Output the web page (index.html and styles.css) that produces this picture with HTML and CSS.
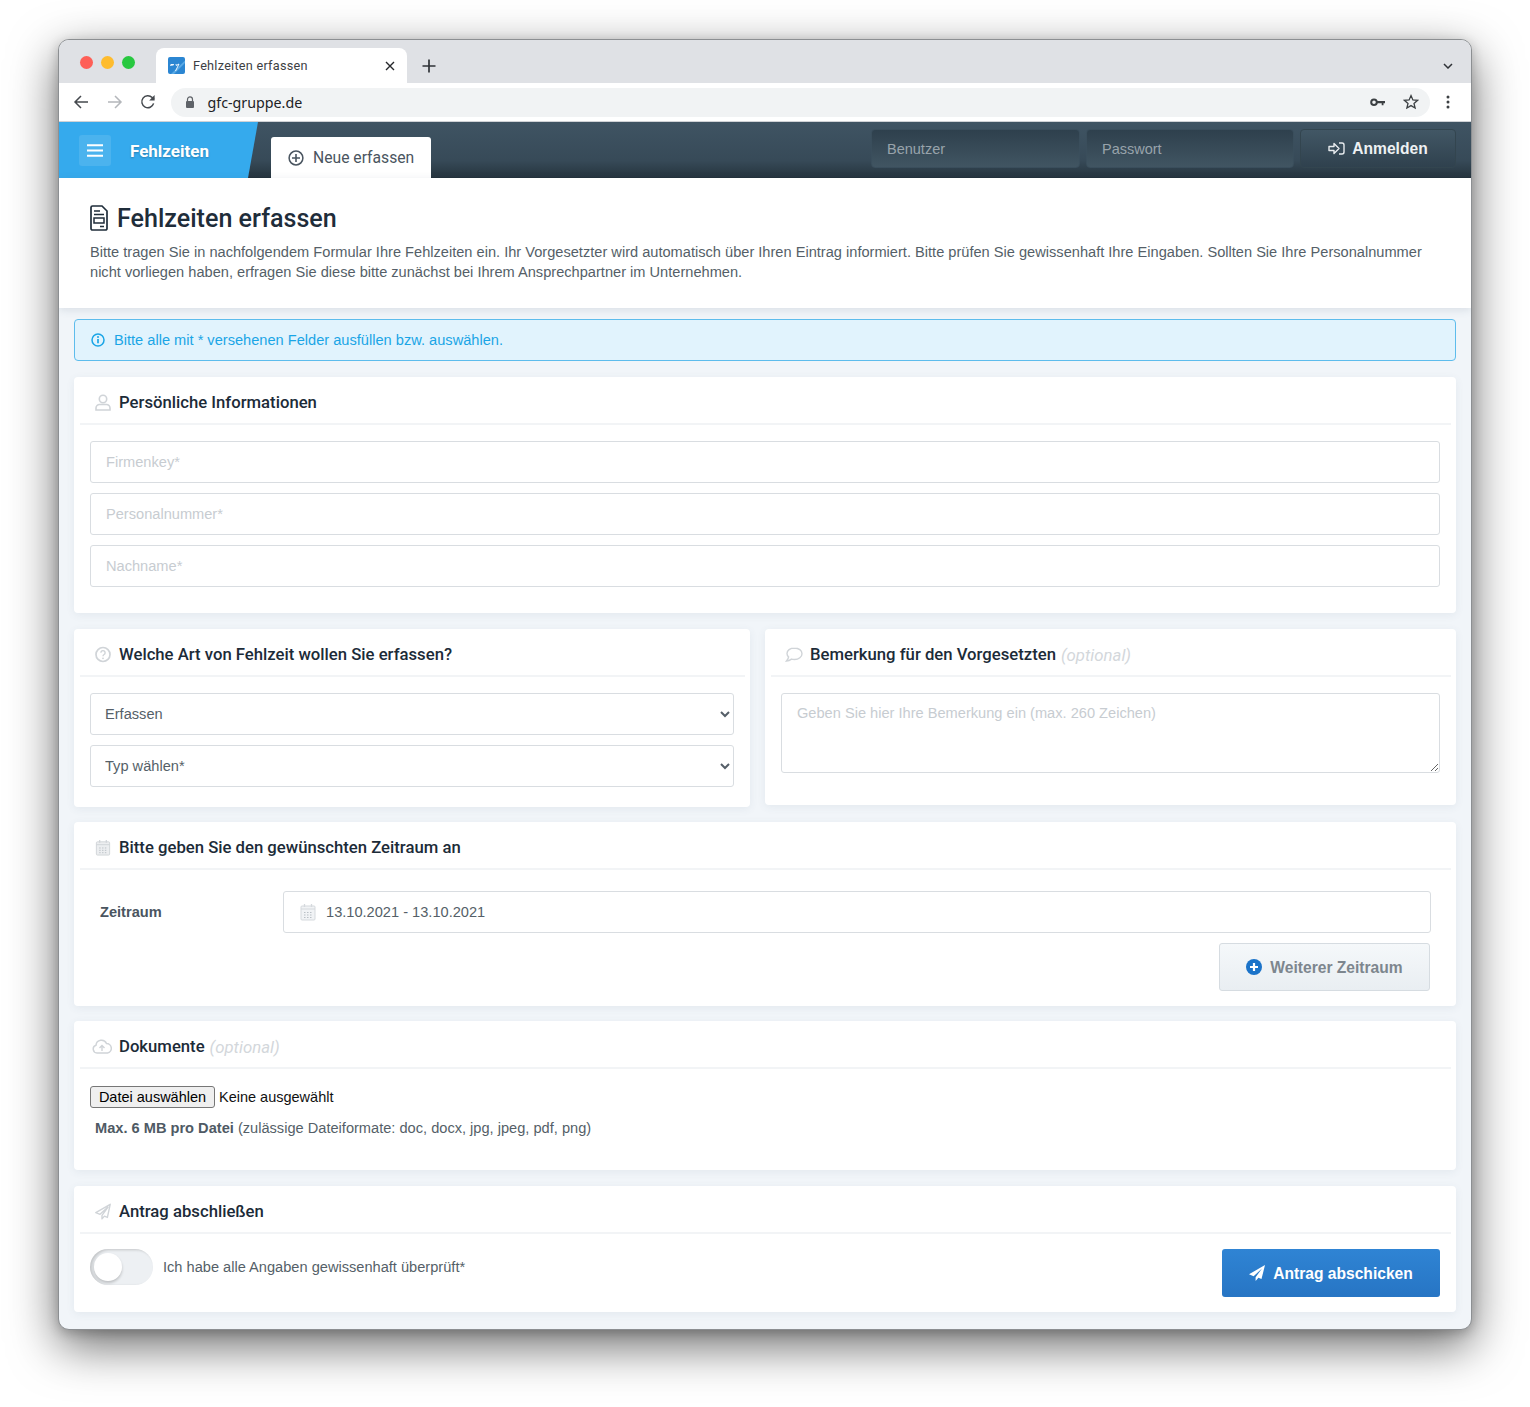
FILE: index.html
```html
<!DOCTYPE html>
<html lang="de">
<head>
<meta charset="utf-8">
<title>Fehlzeiten erfassen</title>
<link rel="stylesheet" href="styles.css">
</head>
<body>
<div class="window">
  <div class="tabstrip">
    <div class="dots"><i class="dot red"></i><i class="dot yellow"></i><i class="dot green"></i></div>
    <div class="tab">
      <svg class="favicon" viewBox="0 0 17 17"><rect width="17" height="17" rx="2" fill="#2b86d2"/><path d="M17 3.500V6L6 17H3z" fill="#5aaae6"/><path d="M2.500 8.500l1-1.500-.5 1.500 1.500-1.500-.5 1.500 1.500-1.500-.5 1.500M8 7l.3 1.500L11 7M11 7l-3.500 7" stroke="#fff" stroke-width=".9" fill="none"/></svg>
      <span class="tab-title">Fehlzeiten erfassen</span>
      <svg class="tab-close" viewBox="0 0 10 10"><path d="M1 1l8 8M9 1l-8 8" stroke="#26282b" stroke-width="1.400"/></svg>
    </div>
    <svg class="new-tab" viewBox="0 0 14 14"><path d="M7 0.500v13M0.500 7h13" stroke="#2f3237" stroke-width="1.700"/></svg>
    <svg class="tab-menu" viewBox="0 0 10 6"><path d="M1 1l4 4 4-4" stroke="#2f3237" stroke-width="1.500" fill="none"/></svg>
  </div>
  <div class="toolbar">
    <svg class="nav" viewBox="0 0 16 16"><path d="M15 8H2M8 2L2 8l6 6" stroke="#45494e" stroke-width="1.500" fill="none"/></svg>
    <svg class="nav" viewBox="0 0 16 16"><path d="M1 8h13M8 2l6 6-6 6" stroke="#b4b7bb" stroke-width="1.500" fill="none"/></svg>
    <svg class="nav" viewBox="0 0 16 16"><path d="M13.600 9.400A6 6 0 1 1 12.200 3.600L14 5.400" stroke="#45494e" stroke-width="1.500" fill="none"/><path d="M14.600 1v5.400H9.200z" fill="#45494e"/></svg>
    <div class="omnibox">
      <svg class="lock" viewBox="0 0 10 12"><path d="M2.500 5V3.400a2.500 2.500 0 0 1 5 0V5" stroke="#5f6368" stroke-width="1.200" fill="none"/><rect x="1" y="5" width="8" height="7" rx="1" fill="#5f6368"/></svg>
      <span class="url">gfc-gruppe.de</span>
      <svg class="key" viewBox="0 0 15 9"><circle cx="4" cy="4.200" r="2.800" stroke="#3c4043" stroke-width="2" fill="none"/><path d="M7 3h8v2.200h-1.500v2h-1.800v-2H7z" fill="#3c4043"/></svg>
      <svg class="star" viewBox="0 0 16 16"><path d="M8 1.600l1.900 4.300 4.700.4-3.600 3.100 1.100 4.600L8 11.600 3.900 14l1.100-4.600L1.400 6.300l4.700-.4z" stroke="#3c4043" stroke-width="1.300" fill="none"/></svg>
    </div>
    <svg class="kebab" viewBox="0 0 4 14"><circle cx="2" cy="2" r="1.500" fill="#3c4043"/><circle cx="2" cy="7" r="1.500" fill="#3c4043"/><circle cx="2" cy="12" r="1.500" fill="#3c4043"/></svg>
  </div>

  <header class="appbar">
    <div class="brand">
      <span class="burger"><svg viewBox="0 0 16 13"><path d="M0 1.200h16M0 6.500h16M0 11.800h16" stroke="#fff" stroke-width="2"/></svg></span>
      <span class="brand-name">Fehlzeiten</span>
    </div>
    <div class="apptab">
      <svg class="apptab-ico" viewBox="0 0 16 16"><circle cx="8" cy="8" r="6.900" stroke="#4a5560" stroke-width="1.500" fill="none"/><path d="M8 4v8M4 8h8" stroke="#4a5560" stroke-width="1.600"/></svg>
      <span>Neue erfassen</span>
    </div>
    <div class="login">
      <input class="login-input" type="text" placeholder="Benutzer">
      <input class="login-input" type="text" placeholder="Passwort">
      <button class="login-btn" type="button">
        <svg viewBox="0 0 17 13"><path d="M1 4.500h5V1.500l5 5-5 5v-3H1z" stroke="#e8ecef" stroke-width="1.400" fill="none" stroke-linejoin="round"/><path d="M11 1h3a2 2 0 0 1 2 2v7a2 2 0 0 1-2 2h-3" stroke="#e8ecef" stroke-width="1.400" fill="none"/></svg>
        Anmelden
      </button>
    </div>
  </header>

  <section class="pagehead">
    <h1 class="title">
      <svg viewBox="0 0 18 26"><path d="M2.500 1h9.500l5 5v17.500a1.500 1.500 0 0 1-1.500 1.500h-13A1.500 1.500 0 0 1 1 23.500v-21A1.500 1.500 0 0 1 2.500 1z" stroke="#1f2d3a" stroke-width="1.700" fill="none"/><path d="M4 6h6M4 9.500h10" stroke="#1f2d3a" stroke-width="1.500"/><rect x="4" y="13" width="10" height="5" stroke="#1f2d3a" stroke-width="1.500" fill="none"/><path d="M10 21.500h4" stroke="#1f2d3a" stroke-width="1.500"/></svg>
      <span>Fehlzeiten erfassen</span>
    </h1>
    <p class="intro">Bitte tragen Sie in nachfolgendem Formular Ihre Fehlzeiten ein. Ihr Vorgesetzter wird automatisch über Ihren Eintrag informiert. Bitte prüfen Sie gewissenhaft Ihre Eingaben. Sollten Sie Ihre Personalnummer nicht vorliegen haben, erfragen Sie diese bitte zunächst bei Ihrem Ansprechpartner im Unternehmen.</p>
  </section>

  <main class="content">
    <div class="alert">
      <svg viewBox="0 0 14 14"><circle cx="7" cy="7" r="6" stroke="#1aa5e6" stroke-width="1.500" fill="none"/><path d="M7 6v4.200" stroke="#1aa5e6" stroke-width="1.700"/><circle cx="7" cy="4" r="1" fill="#1aa5e6"/></svg>
      <span>Bitte alle mit * versehenen Felder ausfüllen bzw. auswählen.</span>
    </div>

    <section class="card">
      <h2 class="card-head">
        <svg class="head-ico" viewBox="0 0 16 17"><circle cx="8" cy="5" r="3.700" stroke="#d0d4d8" stroke-width="1.600" fill="none"/><path d="M1 16v-2a3.500 3.500 0 0 1 3.500-3.500h7A3.500 3.500 0 0 1 15 14v2z" stroke="#d0d4d8" stroke-width="1.600" fill="none"/></svg>
        <span>Persönliche Informationen</span>
      </h2>
      <div class="card-body stack">
        <input class="field" type="text" placeholder="Firmenkey*">
        <input class="field" type="text" placeholder="Personalnummer*">
        <input class="field" type="text" placeholder="Nachname*">
      </div>
    </section>

    <div class="row">
      <section class="card card-flat">
        <h2 class="card-head">
          <svg class="head-ico" viewBox="0 0 16 16"><circle cx="8" cy="8" r="7" stroke="#d0d4d8" stroke-width="1.700" fill="none"/><path d="M5.900 6.200a2.100 2.100 0 1 1 3.200 1.800c-.8.500-1.100.900-1.100 1.700" stroke="#d0d4d8" stroke-width="1.400" fill="none"/><circle cx="8" cy="11.800" r=".9" fill="#d0d4d8"/></svg>
          <span>Welche Art von Fehlzeit wollen Sie erfassen?</span>
        </h2>
        <div class="card-body stack stack-select">
          <select class="field select"><option>Erfassen</option></select>
          <select class="field select"><option>Typ wählen*</option></select>
        </div>
      </section>
      <section class="card card-flat">
        <h2 class="card-head">
          <svg class="head-ico head-ico-wide" viewBox="0 0 18 15"><path d="M9.500 1C5 1 2 3.500 2 6.500c0 1.300.6 2.500 1.600 3.400C3.400 11.500 2.400 13 1.500 14c2 0 3.800-.9 5-1.900 1 .3 2 .4 3 .4 4.300 0 7.500-2.600 7.500-5.800S13.800 1 9.500 1z" stroke="#d0d4d8" stroke-width="1.400" fill="none"/></svg>
          <span>Bemerkung für den Vorgesetzten</span>
          <em class="opt">(optional)</em>
        </h2>
        <div class="card-body note-body">
          <textarea class="field area" placeholder="Geben Sie hier Ihre Bemerkung ein (max. 260 Zeichen)"></textarea>
        </div>
      </section>
    </div>

    <section class="card card-flat">
      <h2 class="card-head">
        <svg class="head-ico" viewBox="0 0 16 18"><rect x="1" y="3" width="14" height="14" rx="1" fill="#eceef0" stroke="#d0d4d8"/><path d="M1 6h14" stroke="#d0d4d8"/><path d="M4.500 1v3M11.500 1v3" stroke="#d0d4d8" stroke-width="1.300"/><path d="M4 9.500h8M4 12h8M4 14.500h8" stroke="#b9bfc5" stroke-dasharray="1.500 1.500"/></svg>
        <span>Bitte geben Sie den gewünschten Zeitraum an</span>
      </h2>
      <div class="range">
        <label class="range-label">Zeitraum</label>
        <div class="field range-field">
          <svg viewBox="0 0 16 18"><rect x="1" y="3" width="14" height="14" rx="1" fill="#f1f3f5" stroke="#d5d9dd"/><path d="M1 6h14" stroke="#d5d9dd"/><path d="M4.500 1v3M11.500 1v3" stroke="#d5d9dd" stroke-width="1.300"/><path d="M4 9.500h8M4 12h8M4 14.500h8" stroke="#b9bfc5" stroke-dasharray="1.500 1.500"/></svg>
          <span>13.10.2021 - 13.10.2021</span>
        </div>
      </div>
      <div class="range-actions">
        <button class="more-btn" type="button">
          <svg viewBox="0 0 16 16"><circle cx="8" cy="8" r="8" fill="#1b73c9"/><path d="M8 4v8M4 8h8" stroke="#fff" stroke-width="2.200"/></svg>
          Weiterer Zeitraum
        </button>
      </div>
    </section>

    <section class="card">
      <h2 class="card-head">
        <svg class="head-ico head-ico-cloud" viewBox="0 0 20 15"><path d="M5 14a4 4 0 0 1-1-7.800A5.500 5.500 0 0 1 14.500 4.500 4.800 4.800 0 0 1 15.500 14z" stroke="#d0d4d8" stroke-width="1.500" fill="none"/><path d="M10 12V6.500M7.500 9L10 6.500 12.500 9" stroke="#d0d4d8" stroke-width="1.400" fill="none"/></svg>
        <span>Dokumente</span>
        <em class="opt">(optional)</em>
      </h2>
      <div class="card-body docs">
        <div class="file">
          <button class="file-btn" type="button">Datei auswählen</button>
          <span>Keine ausgewählt</span>
        </div>
        <p class="hint"><b>Max. 6 MB pro Datei</b> (zulässige Dateiformate: doc, docx, jpg, jpeg, pdf, png)</p>
      </div>
    </section>

    <section class="card card-last">
      <h2 class="card-head">
        <svg class="head-ico" viewBox="0 0 16 16"><path d="M15.200 .8L.8 9.200l4.200 1.600 8-7.200-6 8.200v3.600l2.400-2.800 3 1.300z" stroke="#d0d4d8" stroke-width="1.400" fill="none" stroke-linejoin="round"/></svg>
        <span>Antrag abschließen</span>
      </h2>
      <div class="card-body submit">
        <span class="toggle"><i class="knob"></i></span>
        <span class="toggle-label">Ich habe alle Angaben gewissenhaft überprüft*</span>
        <button class="send-btn" type="button">
          <svg viewBox="0 0 16 16"><path d="M16 0L0 9.300l4.600 1.900 8.400-7.700-6.400 8.700V16l2.800-3.200 3.100 1.300z" fill="#fff"/></svg>
          Antrag abschicken
        </button>
      </div>
    </section>
  </main>
</div>
</body>
</html>
```

FILE: styles.css
```css
* { box-sizing: border-box; }
html, body { margin: 0; height: 100%; background: #fff; }
body { padding: 39px 58px 0; font-family: "Liberation Sans", Arial, sans-serif; overflow: hidden; }
svg { display: block; flex: none; }

.window {
  width: 1414px;
  height: 1291px;
  border: 1px solid #8c8f92;
  border-radius: 11px;
  overflow: hidden;
  background: #f1f5f9;
  box-shadow: 0 16px 48px rgba(0, 0, 0, .58), 0 3px 12px rgba(0, 0, 0, .2);
}

/* browser chrome */
.tabstrip { display: flex; align-items: flex-end; height: 43px; background: #dfe1e5; padding-left: 21px; position: relative; }
.dots { display: flex; gap: 8px; align-self: flex-start; margin-top: 16px; width: 76px; }
.dot { width: 13px; height: 13px; border-radius: 50%; }
.red { background: #fe5f57; }
.yellow { background: #febc2e; }
.green { background: #28c840; }
.tab { display: flex; align-items: center; width: 251px; height: 35px; background: #fff; border-radius: 8px 8px 0 0; padding: 0 12px; }
.favicon { width: 17px; height: 17px; margin-right: 8px; }
.tab-title { font: 400 12.700px Roboto, sans-serif; letter-spacing: .25px; color: #3c4043; flex: 1; }
.tab-close { width: 10px; height: 10px; }
.new-tab { width: 14px; height: 14px; margin: 0 0 10px 15px; }
.tab-menu { width: 10px; height: 6px; margin: 0 18px 14px auto; }

.toolbar { display: flex; align-items: center; height: 39px; background: #fff; border-bottom: 1px solid #cfd2d6; padding: 0 0 0 14px; }
.nav { width: 16px; height: 16px; margin-right: 17.500px; }
.omnibox { display: flex; align-items: center; width: 1259px; height: 29px; margin-left: -3px; background: #f1f3f4; border-radius: 15px; padding: 0 11px 0 14px; }
.lock { width: 10px; height: 12px; margin-right: 13px; }
.url { font: 400 14.250px "Noto Sans", "Open Sans", sans-serif; color: #202124; flex: 1; }
.key { width: 15px; height: 9px; margin-right: 18px; }
.star { width: 16px; height: 16px; }
.kebab { width: 4px; height: 14px; margin-left: 16px; }

/* app bar */
.appbar { display: flex; align-items: flex-end; height: 56px; background: linear-gradient(#3f5463, #374a58 70%, #26353f); border-bottom: 1px solid #22303a; }
.brand { display: flex; align-items: center; align-self: stretch; width: 199px; height: 56px; padding-left: 20px; background: #35aaed; clip-path: polygon(0 0, 100% 0, 189px 100%, 0 100%); }
.burger { display: flex; align-items: center; justify-content: center; width: 32px; height: 31px; background: #4bb3ee; border-radius: 3px; margin-right: 19px; }
.burger svg { width: 16px; height: 13px; }
.brand-name { padding-top: 2px; font: 700 17px Roboto, sans-serif; color: #fff; text-shadow: 0 1px 2px rgba(0,0,0,.25); }
.apptab { display: flex; align-items: center; gap: 9px; width: 160px; height: 41px; margin-left: 13px; margin-bottom: -1px; padding-left: 17px; background: #fff; border-radius: 3px 3px 0 0; font: 400 15.700px Roboto, sans-serif; color: #4a5560; }
.apptab-ico { width: 16px; height: 16px; }
.login { display: flex; gap: 6px; margin-left: auto; margin-right: 15px; align-self: flex-start; margin-top: 7px; }
.login-input { width: 209px; height: 39px; padding: 0 15px; border: 1px solid #3a4e5c; border-radius: 4px; background: linear-gradient(#2e404d, #415562); font: 400 14.500px "Liberation Sans", sans-serif; color: #fff; }
.login-input + .login-input { width: 208px; }
.login-input::placeholder { color: #98a3ab; opacity: 1; }
.login-btn { display: flex; align-items: center; justify-content: center; gap: 7px; width: 156px; height: 39px; border: 1px solid #33454f; border-radius: 4px; background: linear-gradient(#425765, #2f414e); color: #eef1f3; font: 700 15.600px "Liberation Sans", sans-serif; }
.login-btn svg { width: 17px; height: 13px; }

/* page head */
.pagehead { height: 130px; background: #fff; padding: 26px 31px 0; box-shadow: 0 2px 8px rgba(70, 90, 110, .14); position: relative; }
.title { display: flex; align-items: center; gap: 9px; margin: 0; height: 28px; font: 500 25.100px Roboto, sans-serif; color: #1f2d3a; }
.title svg { width: 18px; height: 26px; }
.intro { margin: 10px 0 0; font-size: 14.620px; line-height: 20px; color: #555f68; }

/* content */
.content { padding: 11px 15px 0; }
.alert { display: flex; align-items: center; gap: 9px; height: 42px; padding-left: 16px; margin-bottom: 16px; border: 1px solid #5dbcec; border-radius: 4px; background: #e1f3fd; font-size: 14.620px; color: #1aa5e6; }
.alert svg { width: 14px; height: 14px; }

.card { background: #fff; border-radius: 4px; box-shadow: 0 2px 8px rgba(70, 90, 110, .08); margin-bottom: 16px; }
.card-flat { margin-bottom: 15px; }
.card-last { margin-bottom: 0; }
.card-head { display: flex; align-items: center; height: 48px; margin: 0 5px 0 6px; padding: 5px 0 0 15px; border-bottom: 2px solid #f2f4f6; font: 500 16.700px Roboto, sans-serif; color: #1c2b38; }
.head-ico { width: 16px; height: 17px; margin-right: 8px; }
.head-ico-wide { width: 18px; height: 15px; margin-right: 7px; margin-left: -1px; }
.head-ico-cloud { width: 20px; height: 15px; margin-right: 7px; margin-left: -3px; }
.opt { font: italic 400 16.800px Roboto, sans-serif; color: #d3d7db; margin-left: 5px; }
.card-body { padding: 16px; }
.stack { display: flex; flex-direction: column; gap: 10px; padding-bottom: 26px; }
.stack-select { padding-bottom: 20px; }

.field { display: block; width: 100%; height: 42px; padding: 0 15px; border: 1px solid #d9dde1; border-radius: 3px; background: #fff; font: 400 14.620px "Liberation Sans", sans-serif; color: #555f68; outline: none; }
.field::placeholder { color: #c7ccd1; opacity: 1; }
.select { padding-left: 10px; }
.note-body { padding-bottom: 32px; }
.area { height: 80px; padding-top: 11px; resize: vertical; vertical-align: top; }

.row { display: grid; grid-template-columns: 676px 691px; gap: 15px; align-items: start; }
.row .card { margin-bottom: 15px; }
.row .card + .card { margin-bottom: 17px; }

.range { display: flex; align-items: center; padding: 21px 25px 0 26px; }
.range-label { width: 183px; font-weight: 700; font-size: 14.620px; color: #4a5560; }
.range-field { display: flex; align-items: center; gap: 10px; flex: 1; padding-left: 16px; }
.range-field svg { width: 16px; height: 18px; }
.range-actions { display: flex; justify-content: flex-end; padding: 10px 26px 15px 0; }
.more-btn { display: flex; align-items: center; justify-content: center; gap: 8px; width: 211px; height: 48px; padding: 1px 0 0; border: 1px solid #d6dce1; border-radius: 3px; background: linear-gradient(#f5f8fa, #e9eef2); font: 700 15.600px "Liberation Sans", sans-serif; color: #7d868e; }
.more-btn svg { width: 16px; height: 16px; margin-top: -1px; }

.docs { padding: 17px 16px 32px; }
.file { display: flex; align-items: center; gap: 4px; font-size: 14.500px; color: #111; }
.file-btn { width: 125px; height: 22px; padding: 0; border: 1px solid #767676; border-radius: 3px; background: #efefef; font: 400 14.500px "Liberation Sans", sans-serif; color: #000; }
.hint { margin: 10px 0 0 5px; font-size: 14.620px; line-height: 20px; color: #555f68; }
.hint b { color: #4f5a64; }

.submit { display: flex; align-items: flex-start; padding: 15px 16px; }
.toggle { width: 63px; height: 36px; border-radius: 18px; background: #edf0f3; box-shadow: inset 2px 1px 3px rgba(0,0,0,.18); padding: 4px; }
.knob { display: block; width: 28px; height: 28px; border-radius: 50%; background: #fff; box-shadow: 0 2px 3px rgba(0,0,0,.2); }
.toggle-label { margin: 8px 0 0 10px; font-size: 14.620px; line-height: 20px; color: #555f68; flex: 1; }
.send-btn { display: flex; align-items: center; justify-content: center; gap: 8px; width: 218px; height: 48px; padding: 1px 0 0; border: 0; border-radius: 3px; background: linear-gradient(#2f84d4, #2775c4); font: 700 15.600px "Liberation Sans", sans-serif; color: #fff; }
.send-btn svg { width: 16px; height: 16px; margin-top: -1px; }
```
